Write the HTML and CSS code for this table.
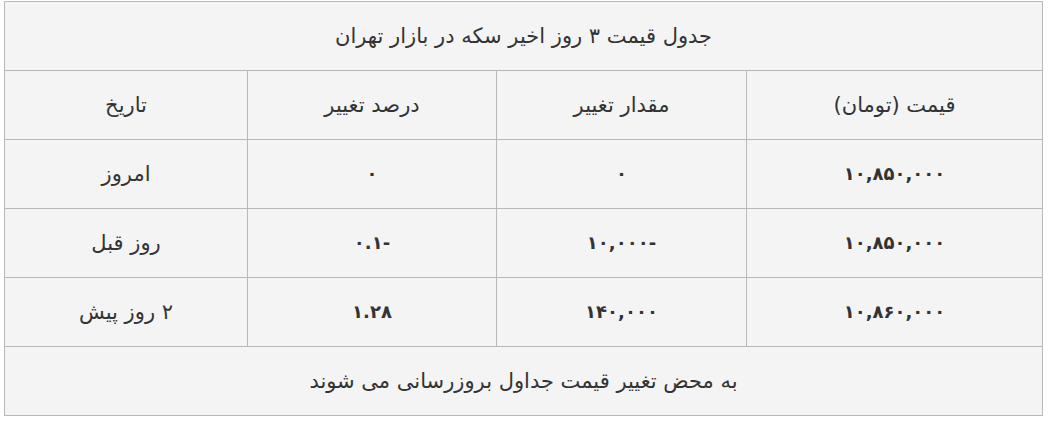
FILE: index.html
```html
<!DOCTYPE html>
<html lang="fa" dir="rtl">
<head>
<meta charset="utf-8">
<link rel="stylesheet" href="styles.css">
</head>
<body>
<table class="price-table">
  <colgroup>
    <col class="c1">
    <col class="c2">
    <col class="c3">
    <col class="c4">
  </colgroup>
  <tr><td class="caption" colspan="4">جدول قیمت ۳ روز اخیر سکه در بازار تهران</td></tr>
  <tr>
    <td>قیمت (تومان)</td>
    <td>مقدار تغییر</td>
    <td>درصد تغییر</td>
    <td>تاریخ</td>
  </tr>
  <tr>
    <td class="num">۱۰,۸۵۰,۰۰۰</td>
    <td class="num">۰</td>
    <td class="num">۰</td>
    <td>امروز</td>
  </tr>
  <tr>
    <td class="num">۱۰,۸۵۰,۰۰۰</td>
    <td class="num">-۱۰,۰۰۰</td>
    <td class="num">-۰.۱</td>
    <td>روز قبل</td>
  </tr>
  <tr>
    <td class="num">۱۰,۸۶۰,۰۰۰</td>
    <td class="num">۱۴۰,۰۰۰</td>
    <td class="num">۱.۲۸</td>
    <td>۲ روز پیش</td>
  </tr>
  <tr><td class="caption" colspan="4">به محض تغییر قیمت جداول بروزرسانی می شوند</td></tr>
</table>
</body>
</html>
```
FILE: styles.css
```css
html, body {
  margin: 0;
  background: #ffffff;
}
body {
  padding: 1px 5px 0 5px;
  font-family: "DejaVu Sans", "Noto Sans", sans-serif;
  color: #333333;
}
.price-table {
  width: 1038px;
  border-collapse: collapse;
  table-layout: fixed;
  background: #f4f4f4;
}
.price-table td {
  border: 1px solid #b8b8b8;
  height: 68px;
  padding: 0;
  text-align: center;
  vertical-align: middle;
  font-size: 21px;
  line-height: 28px;
}
.c1 { width: 296px; }
.c2 { width: 250px; }
.c3 { width: 249px; }
.c4 { width: 243px; }
.price-table td.num {
  font-weight: bold;
  font-size: 18px;
}
```
